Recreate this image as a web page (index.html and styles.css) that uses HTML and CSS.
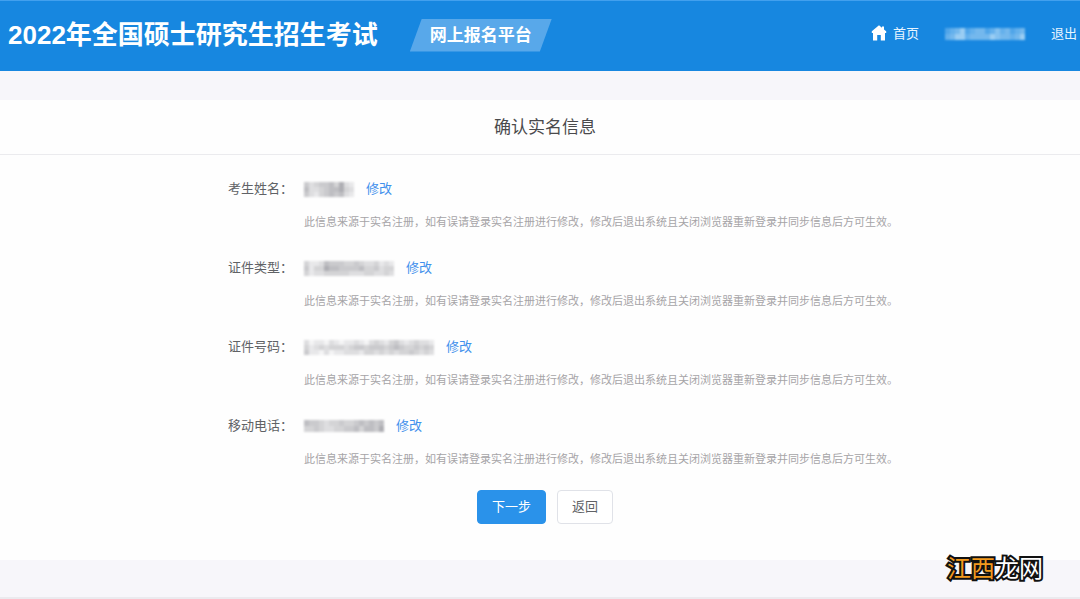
FILE: index.html
```html
<!DOCTYPE html>
<html lang="zh-CN">
<head>
<meta charset="utf-8">
<meta name="viewport" content="width=device-width, initial-scale=1">
<title>确认实名信息</title>
<link rel="stylesheet" href="styles.css">
</head>
<body>
<header class="header">
  <h1 class="title">2022年全国硕士研究生招生考试</h1>
  <div class="badge">网上报名平台</div>
  <nav class="nav">
    <a class="nav-link" href="#"><svg class="home-icon" viewBox="0 0 16 16" aria-hidden="true"><path d="M8 0.3 0.8 6.2V8H2V15.6H6.2V10H9.8V15.6H14V8H15.2V6.2L13 4.4V1.5H11V2.8Z"/></svg>首页</a>
    <svg class="mosaic" data-cells="3457345534645345|4577455557655457" data-tone="light" role="img" aria-label="账号"></svg>
    <a class="nav-link" href="#">退出</a>
  </nav>
</header>
<main class="panel">
  <h2 class="panel-title">确认实名信息</h2>
  <form class="form">
    <div class="row">
      <span class="label">考生姓名：</span>
      <div class="value"><svg class="mosaic" data-cells="4234453621|5223455632|4213454521" role="img" aria-label="已隐藏"></svg><a class="edit" href="#">修改</a></div>
      <p class="hint">此信息来源于实名注册，如有误请登录实名注册进行修改，修改后退出系统且关闭浏览器重新登录并同步信息后方可生效。</p>
    </div>
    <div class="row">
      <span class="label">证件类型：</span>
      <div class="value"><svg class="mosaic" data-cells="311254443343223121|413365544445334233|312233333222332232" role="img" aria-label="已隐藏"></svg><a class="edit" href="#">修改</a></div>
      <p class="hint">此信息来源于实名注册，如有误请登录实名注册进行修改，修改后退出系统且关闭浏览器重新登录并同步信息后方可生效。</p>
    </div>
    <div class="row">
      <span class="label">证件号码：</span>
      <div class="value"><svg class="mosaic" data-cells="20110210112102321342123221|31232333234434443454334343|41102011222133232323343232" role="img" aria-label="已隐藏"></svg><a class="edit" href="#">修改</a></div>
      <p class="hint">此信息来源于实名注册，如有误请登录实名注册进行修改，修改后退出系统且关闭浏览器重新登录并同步信息后方可生效。</p>
    </div>
    <div class="row">
      <span class="label">移动电话：</span>
      <div class="value"><svg class="mosaic" data-cells="5443233433454545|3343223344535546" role="img" aria-label="已隐藏"></svg><a class="edit" href="#">修改</a></div>
      <p class="hint">此信息来源于实名注册，如有误请登录实名注册进行修改，修改后退出系统且关闭浏览器重新登录并同步信息后方可生效。</p>
    </div>
    <div class="actions">
      <button class="button primary" type="button">下一步</button>
      <button class="button" type="button">返回</button>
    </div>
  </form>
</main>
<footer class="footer"></footer>
<div class="watermark"><span class="watermark-accent">江西</span>龙网</div>
<script src="mosaic.js"></script>
</body>
</html>
```
FILE: styles.css
```css
* {
  box-sizing: border-box;
}

body {
  margin: 0;
  min-height: 100vh;
  display: flex;
  flex-direction: column;
  background: #f7f6fa;
  color: #606266;
  font: 13px/22px "Liberation Sans", "Noto Sans CJK SC", sans-serif;
}

a {
  text-decoration: none;
}

.header {
  display: flex;
  align-items: center;
  min-height: 71px;
  padding: 0 3px 2px 8px;
  border-top: 1px solid #42a0ee;
  background: #1787e0;
  color: #fff;
}

.title {
  margin: 0;
  font-size: 26px;
  line-height: 36px;
  font-weight: 700;
}

.badge {
  margin-left: 32px;
  padding: 0 20px;
  background: #58a8ea;
  clip-path: polygon(12px 0, 100% 0, calc(100% - 12px) 100%, 0 100%);
  font-size: 17px;
  line-height: 33px;
  font-weight: 700;
}

.nav {
  display: flex;
  align-items: center;
  gap: 26px;
  margin-left: auto;
  padding-bottom: 2px;
}

.nav-link {
  display: flex;
  align-items: center;
  gap: 6px;
  color: #e8f5ff;
}

.home-icon {
  width: 16px;
  height: 16px;
  margin-bottom: 2px;
  fill: #fff;
}

.mosaic {
  display: block;
  filter: blur(1px);
}

.panel {
  margin-top: 29px;
  padding-bottom: 36px;
  background: #fefefe;
}

.panel-title {
  margin: 0;
  padding: 2px 0 0 10px;
  border-bottom: 1px solid #ebebee;
  color: #4a4a4c;
  font-size: 17px;
  line-height: 52px;
  font-weight: 400;
  text-align: center;
}

.form {
  padding-top: 23px;
}

.row {
  display: grid;
  grid-template-columns: 76px 1fr;
  row-gap: 14px;
  margin-bottom: 27px;
  padding-left: 228px;
}

.value {
  display: flex;
  align-items: center;
  gap: 12px;
}

.edit {
  color: #4190ec;
}

.hint {
  grid-column: 2;
  margin: 0;
  color: #a6a4a7;
  font-size: 11px;
  line-height: 16px;
}

.actions {
  display: flex;
  justify-content: center;
  gap: 11px;
  margin-top: -4px;
  padding-left: 10px;
}

.button {
  height: 34px;
  padding: 0 14px;
  border: 1px solid #e0e2e8;
  border-radius: 4px;
  background: #fff;
  color: #606266;
  font: inherit;
}

.primary {
  border-color: #2a92ea;
  background: #2a92ea;
  color: #fff;
}

.footer {
  margin-top: auto;
  height: 2px;
  background: #ebeaee;
}

.watermark {
  position: absolute;
  right: 37px;
  bottom: 14px;
  color: #fff;
  font-size: 24px;
  line-height: 32px;
  -webkit-text-stroke: 4px #111;
  paint-order: stroke fill;
}

.watermark-accent {
  color: #f39a1e;
}
```
FILE: mosaic.js
```js
// Draws masked personal data as a grid of shaded cells.
const palettes = {
  dark: ["#f4f4f5", "#e8e8ea", "#dedee0", "#d4d4d6", "#cacacd", "#bebec2", "#aeaeb3", "#98989e"],
  light: ["#1787e0", "#2a91e3", "#3d9be6", "#50a5e9", "#64b0ec", "#74b8ed", "#84c1f0", "#9acdf3"]
};
document.querySelectorAll(".mosaic").forEach((svg) => {
  const rows = svg.dataset.cells.split("|");
  const palette = palettes[svg.dataset.tone || "dark"];
  const height = rows.length === 3 ? 5 : 6;
  svg.setAttribute("width", rows[0].length * 5);
  svg.setAttribute("height", rows.length * height);
  rows.forEach((row, y) => {
    [...row].forEach((shade, x) => {
      const cell = document.createElementNS("http://www.w3.org/2000/svg", "rect");
      cell.setAttribute("x", x * 5);
      cell.setAttribute("y", y * height);
      cell.setAttribute("width", 5);
      cell.setAttribute("height", height);
      cell.setAttribute("fill", palette[Number(shade)]);
      svg.append(cell);
    });
  });
});
```
